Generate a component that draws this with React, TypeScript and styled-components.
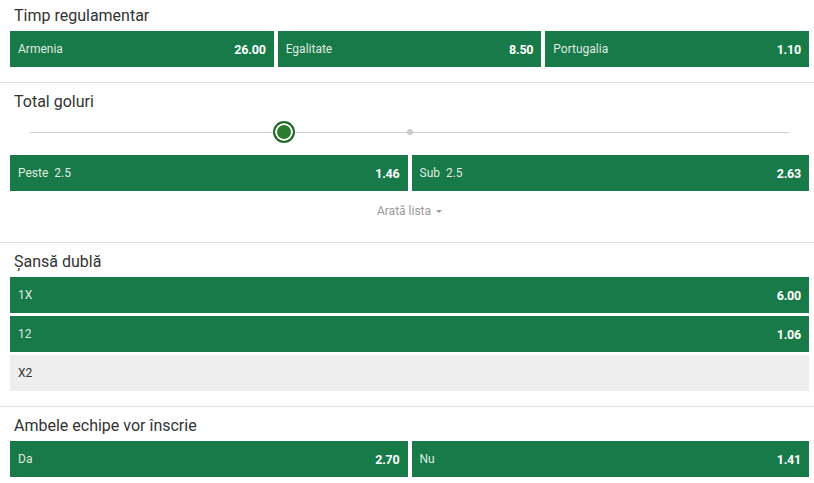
import styled, { createGlobalStyle } from "styled-components";

const GlobalStyle = createGlobalStyle`
  body {
    margin: 0;
    background: #fff;
    font-family: Roboto, "Liberation Sans", Arial, sans-serif;
  }
`;

const Page = styled.div`
  width: 814px;
`;

const Section = styled.section<{ $first?: boolean }>`
  padding: ${(p) => (p.$first ? "4px" : "7px")} 5px 15px 10px;
  border-bottom: 1px solid #e0e0e0;
`;

const Title = styled.div`
  font-size: 16px;
  line-height: 24px;
  color: #333;
  padding-left: 4px;
  margin-bottom: 3px;
`;

const Row = styled.div<{ $cols: number }>`
  display: grid;
  grid-template-columns: repeat(${(p) => p.$cols}, 1fr);
  gap: 4px;
`;

const Stack = styled.div`
  display: flex;
  flex-direction: column;
  gap: 3px;
`;

const Odd = styled.div<{ $off?: boolean }>`
  height: 36px;
  display: flex;
  align-items: center;
  justify-content: space-between;
  padding: 0 8px;
  background: ${(p) => (p.$off ? "#eeeeee" : "#177a48")};
  color: ${(p) => (p.$off ? "#333" : "#fff")};
  cursor: pointer;
`;

const Label = styled.span<{ $off?: boolean }>`
  font-size: 12px;
  color: ${(p) => (p.$off ? "#333" : "rgba(255, 255, 255, 0.88)")};
`;

const Price = styled.span`
  font-size: 12.5px;
  font-weight: 700;
  letter-spacing: -0.2px;
`;

const Slider = styled.div`
  position: relative;
  height: 30px;
  margin: 0 20px 8px 20px;
  display: flex;
  align-items: center;
`;

const Track = styled.div`
  flex: 1;
  height: 1px;
  background: #cccccc;
`;

const Dot = styled.div<{ $at: number }>`
  position: absolute;
  top: 50%;
  left: ${(p) => p.$at}%;
  width: 6px;
  height: 6px;
  margin: -3px 0 0 -3px;
  border-radius: 50%;
  background: #cccccc;
`;

const Knob = styled.div<{ $at: number }>`
  position: absolute;
  top: 50%;
  left: ${(p) => p.$at}%;
  width: 18px;
  height: 18px;
  margin: -11px 0 0 -11px;
  border-radius: 50%;
  border: 2px solid #1f6b2c;
  background: #2a7d2e;
  box-shadow: inset 0 0 0 2px #fff;
`;

const ShowList = styled.div`
  padding: 12px 0 8px;
  text-align: center;
  font-size: 12px;
  line-height: 16px;
  color: #9a9a9a;
  cursor: pointer;
`;

const Caret = styled.span`
  display: inline-block;
  margin-left: 5px;
  vertical-align: middle;
  border-left: 3px solid transparent;
  border-right: 3px solid transparent;
  border-top: 3px solid #9a9a9a;
`;

const OddButton = ({ label, price, off }: { label: string; price?: string; off?: boolean }) => (
  <Odd $off={off}>
    <Label $off={off}>{label}</Label>
    {price && <Price>{price}</Price>}
  </Odd>
);

export default function App() {
  return (
    <Page>
      <GlobalStyle />
      <Section $first>
        <Title>Timp regulamentar</Title>
        <Row $cols={3}>
          <OddButton label="Armenia" price="26.00" />
          <OddButton label="Egalitate" price="8.50" />
          <OddButton label="Portugalia" price="1.10" />
        </Row>
      </Section>

      <Section>
        <Title>Total goluri</Title>
        <Slider>
          <Track />
          <Dot $at={50} />
          <Knob $at={33.4} />
        </Slider>
        <Row $cols={2}>
          <OddButton label={"Peste\u00a0 2.5"} price="1.46" />
          <OddButton label={"Sub\u00a0 2.5"} price="2.63" />
        </Row>
        <ShowList>
          Arată lista
          <Caret />
        </ShowList>
      </Section>

      <Section>
        <Title>Șansă dublă</Title>
        <Stack>
          <OddButton label="1X" price="6.00" />
          <OddButton label="12" price="1.06" />
          <OddButton label="X2" off />
        </Stack>
      </Section>

      <Section>
        <Title>Ambele echipe vor înscrie</Title>
        <Row $cols={2}>
          <OddButton label="Da" price="2.70" />
          <OddButton label="Nu" price="1.41" />
        </Row>
      </Section>
    </Page>
  );
}
